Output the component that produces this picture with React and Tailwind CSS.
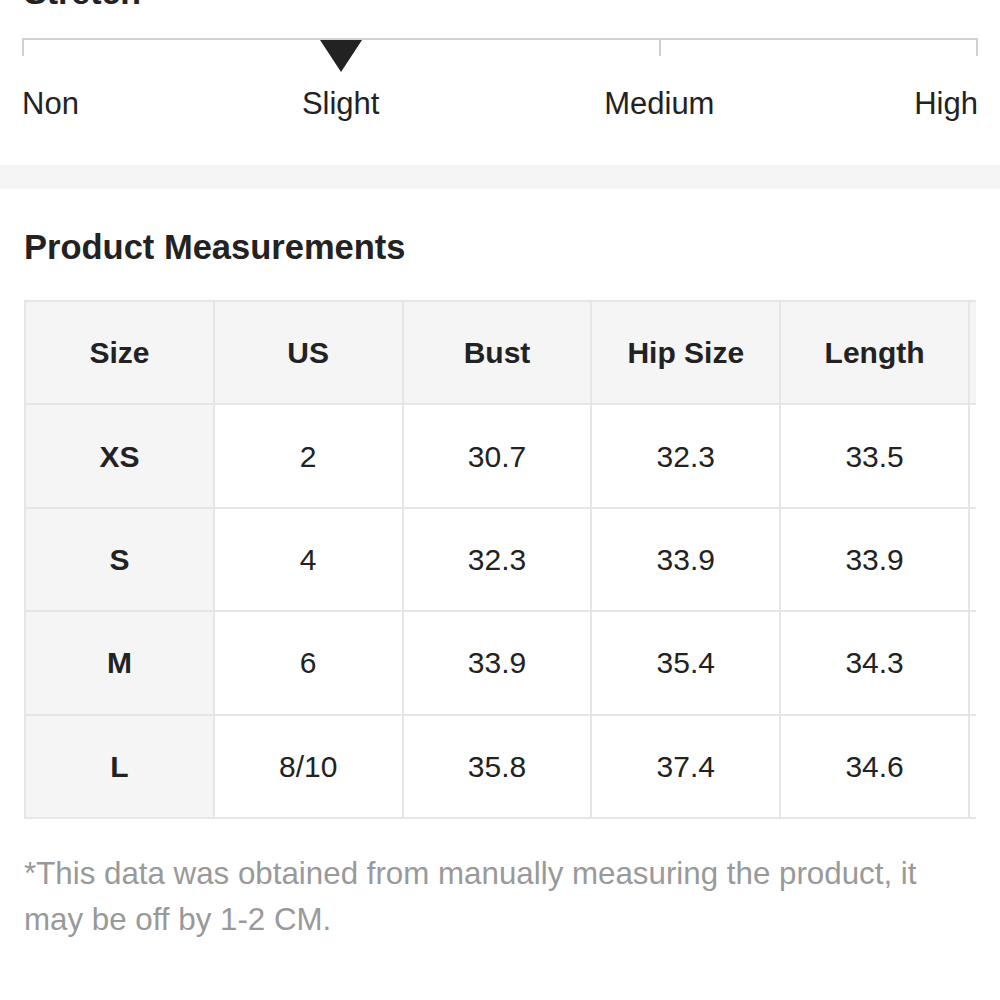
import React from "react";

const headers = ["Size", "US", "Bust", "Hip Size", "Length", ""];
const rows = [
  ["XS", "2", "30.7", "32.3", "33.5", ""],
  ["S", "4", "32.3", "33.9", "33.9", ""],
  ["M", "6", "33.9", "35.4", "34.3", ""],
  ["L", "8/10", "35.8", "37.4", "34.6", ""],
];

function Cell({ children, gray, bold }) {
  return (
    <div
      className={
        "w-[188.8px] h-[103.4px] shrink-0 border-r-2 border-b-2 border-[#e6e6e6] flex items-center justify-center text-[30px] text-[#222] " +
        (gray ? "bg-[#f5f5f5] " : "bg-white ") +
        (bold ? "font-bold" : "font-normal")
      }
    >
      {children}
    </div>
  );
}

export default function App() {
  return (
    <div
      className="w-[1000px] h-[1000px] overflow-hidden bg-white text-[#222]"
      style={{ fontFamily: '"Liberation Sans", Arial, sans-serif' }}
    >
      <div className="mt-[-25px] ml-[24px] h-[34px] text-[34px] leading-[34px] font-bold">
        Stretch
      </div>

      <div className="relative mt-[29px] ml-[22px] w-[956px] h-[18px] border-t-2 border-[#d0d0d0] grid grid-cols-3">
        <div className="border-l-2 border-[#d0d0d0]" />
        <div className="border-l-2 border-[#d0d0d0]" />
        <div className="border-l-2 border-r-2 border-[#d0d0d0]" />
        <div className="absolute left-[298px] top-0 w-0 h-0 border-l-[21px] border-r-[21px] border-t-[32px] border-l-transparent border-r-transparent border-t-[#222]" />
      </div>

      <div className="mt-[30px] ml-[22px] w-[956px] grid grid-cols-6 text-[31px] leading-[36px] text-[#222]">
        <div className="text-left">Non</div>
        <div className="col-span-2 text-center">Slight</div>
        <div className="col-span-2 text-center">Medium</div>
        <div className="text-right">High</div>
      </div>

      <div className="mt-[43px] h-[24px] bg-[#f5f5f5]" />

      <div className="mt-[38px] ml-[24px] text-[34.5px] leading-[40px] font-bold text-[#222]">
        Product Measurements
      </div>

      <div className="mt-[33px] ml-[24px] w-[952px] overflow-hidden">
        <div className="w-max border-t-2 border-l-2 border-[#e6e6e6]">
          <div className="flex">
            {headers.map((h, i) => (
              <Cell key={i} gray bold>
                {h}
              </Cell>
            ))}
          </div>
          {rows.map((r) => (
            <div className="flex" key={r[0]}>
              {r.map((v, i) => (
                <Cell key={i} gray={i === 0} bold={i === 0}>
                  {v}
                </Cell>
              ))}
            </div>
          ))}
        </div>
      </div>

      <div className="mt-[32px] ml-[24px] w-[930px] text-[31.3px] leading-[46px] text-[#999]">
        *This data was obtained from manually measuring the product, it may be off by 1-2 CM.
      </div>
    </div>
  );
}
